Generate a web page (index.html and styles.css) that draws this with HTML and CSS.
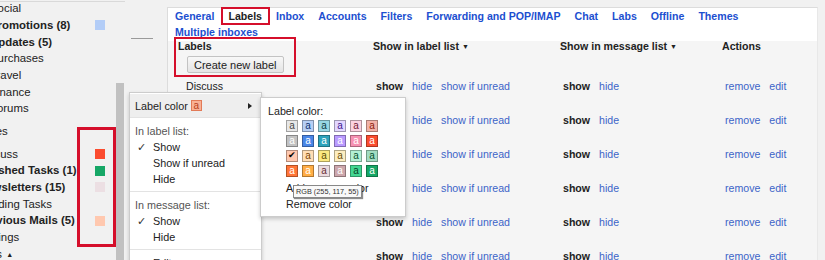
FILE: index.html
```html
<!DOCTYPE html>
<html lang="en">
<head>
  <meta charset="UTF-8">
  <title>Settings - Labels</title>
  <link rel="stylesheet" href="styles.css">
</head>
<body>
<div class="page">
  <!-- left navigation, scrolled sideways -->
  <nav class="nav">
    <div class="nav-labels">
      <ul class="nav-list">
        <li class="sub">Social</li>
        <li class="sub bold">Promotions (8)<i class="dot dot-blue"></i></li>
        <li class="sub bold">Updates (5)</li>
        <li class="sub">Purchases</li>
        <li class="sub">Travel</li>
        <li class="sub">Finance</li>
        <li class="sub">Forums</li>
        <li class="spaced">Notes</li>
        <li>Discuss<i class="dot dot-red"></i></li>
        <li class="bold">Finished Tasks (1)<i class="dot dot-green"></i></li>
        <li class="bold">Newsletters (15)<i class="dot dot-pink"></i></li>
        <li>Pending Tasks</li>
        <li class="bold">Previous Mails (5)<i class="dot dot-peach"></i></li>
        <li>Settings</li>
        <li><span>Less <span class="up">&#9650;</span></span></li>
      </ul>
      <div class="mark mark-dots"></div>
    </div>
    <div class="scrollbar"><div class="thumb"></div></div>
  </nav>

  <div class="gutter"><span class="dash"></span></div>

  <main class="panel">
    <div class="tabs">
      <a href="#">General</a>
      <a href="#" class="active">Labels</a>
      <a href="#">Inbox</a>
      <a href="#">Accounts</a>
      <a href="#">Filters</a>
      <a href="#">Forwarding and POP/IMAP</a>
      <a href="#">Chat</a>
      <a href="#">Labs</a>
      <a href="#">Offline</a>
      <a href="#">Themes</a>
      <a href="#">Multiple inboxes</a>
    </div>

    <div class="label-table">
      <div class="thead">
        <div class="name-head">
          <span>Labels</span>
          <button type="button">Create new label</button>
        </div>
        <div>Show in label list <span class="caret">&#9660;</span></div>
        <div>Show in message list <span class="caret">&#9660;</span></div>
        <div>Actions</div>
      </div>

      <div class="row">
        <div class="cell name">Discuss</div>
        <div class="cell"><b>show</b><a href="#">hide</a><a href="#">show if unread</a></div>
        <div class="cell"><b>show</b><a href="#">hide</a></div>
        <div class="cell"><a href="#">remove</a><a href="#">edit</a></div>
      </div>
      <div class="row">
        <div class="cell name">Finished Tasks</div>
        <div class="cell"><b>show</b><a href="#">hide</a><a href="#">show if unread</a></div>
        <div class="cell"><b>show</b><a href="#">hide</a></div>
        <div class="cell"><a href="#">remove</a><a href="#">edit</a></div>
      </div>
      <div class="row">
        <div class="cell name">Newsletters</div>
        <div class="cell"><b>show</b><a href="#">hide</a><a href="#">show if unread</a></div>
        <div class="cell"><b>show</b><a href="#">hide</a></div>
        <div class="cell"><a href="#">remove</a><a href="#">edit</a></div>
      </div>
      <div class="row">
        <div class="cell name">Notes</div>
        <div class="cell"><b>show</b><a href="#">hide</a><a href="#">show if unread</a></div>
        <div class="cell"><b>show</b><a href="#">hide</a></div>
        <div class="cell"><a href="#">remove</a><a href="#">edit</a></div>
      </div>
      <div class="row">
        <div class="cell name">Pending Tasks</div>
        <div class="cell"><b>show</b><a href="#">hide</a><a href="#">show if unread</a></div>
        <div class="cell"><b>show</b><a href="#">hide</a></div>
        <div class="cell"><a href="#">remove</a><a href="#">edit</a></div>
      </div>
      <div class="row">
        <div class="cell name">Previous Mails</div>
        <div class="cell"><b>show</b><a href="#">hide</a><a href="#">show if unread</a></div>
        <div class="cell"><b>show</b><a href="#">hide</a></div>
        <div class="cell"><a href="#">remove</a><a href="#">edit</a></div>
      </div>
    </div>
  </main>

  <!-- label context menu -->
  <div class="menu">
    <div class="menu-color">Label color <span class="swatch-now">a</span><span class="arrow"></span></div>
    <div class="menu-section">
      <h4>In label list:</h4>
      <div class="menu-item"><span class="check">&#10003;</span>Show</div>
      <div class="menu-item"><span class="check"></span>Show if unread</div>
      <div class="menu-item"><span class="check"></span>Hide</div>
    </div>
    <div class="menu-section">
      <h4>In message list:</h4>
      <div class="menu-item"><span class="check">&#10003;</span>Show</div>
      <div class="menu-item"><span class="check"></span>Hide</div>
    </div>
    <div class="menu-section last">
      <div class="menu-item"><span class="check"></span>Edit</div>
      <div class="menu-item"><span class="check"></span>Remove label</div>
    </div>
  </div>

  <!-- colour picker submenu -->
  <div class="palette">
    <div class="palette-title">Label color:</div>
    <div class="swatches">
      <span class="sw sw-1">a</span><span class="sw sw-2">a</span><span class="sw sw-3">a</span>
      <span class="sw sw-4">a</span><span class="sw sw-5">a</span><span class="sw sw-6">a</span>
      <span class="sw sw-7">a</span><span class="sw sw-8">a</span><span class="sw sw-9">a</span>
      <span class="sw sw-10">a</span><span class="sw sw-11">a</span><span class="sw sw-12">a</span>
      <span class="sw sw-13 picked">&#10004;</span><span class="sw sw-14">a</span><span class="sw sw-15">a</span>
      <span class="sw sw-16">a</span><span class="sw sw-17">a</span><span class="sw sw-18">a</span>
      <span class="sw sw-19">a</span><span class="sw sw-20">a</span><span class="sw sw-21">a</span>
      <span class="sw sw-22">a</span><span class="sw sw-23">a</span><span class="sw sw-24">a</span>
    </div>
    <div class="palette-link first">Add custom color</div>
    <div class="palette-link">Remove color</div>
  </div>

  <div class="tip">RGB (255, 117, 55)</div>
</div>
</body>
</html>
```

FILE: styles.css
```css
body {
  margin: 0;
  font-family: "Liberation Sans", Arial, sans-serif;
  background: #f1f1f1;
  color: #222;
  overflow: hidden;
}

.page {
  position: relative;
  display: flex;
  width: 825px;
  height: 260px;
  overflow: hidden;
}

/* left navigation */
.nav {
  display: flex;
  flex-shrink: 0;
  width: 125px;
  height: 258px;
  margin-top: 1px;
  border-top: 1px solid #d9d9d9;
}

.nav-labels {
  position: relative;
  width: 116px;
  overflow: hidden;
  font-size: 11.4px;
}

.nav-list {
  list-style: none;
  margin: -2px 0 0 -22px;
  padding: 0;
}

.nav-list li {
  display: flex;
  align-items: center;
  justify-content: space-between;
  height: 16.67px;
  white-space: nowrap;
}

.nav-list .sub {
  padding-left: 12px;
}

.nav-list .bold {
  font-weight: bold;
}

.nav-list .spaced {
  margin: 6px 0;
}

.nav-list .up {
  font-size: 7px;
  margin-left: 1px;
  vertical-align: 1px;
}

.dot {
  flex-shrink: 0;
  width: 10px;
  height: 10px;
  margin: 1px 11px 0 0;
}

.dot-blue { background: #b3cdf7; }
.dot-red { background: #fb4c2f; }
.dot-green { background: #16a766; }
.dot-pink { background: #ecdfe3; }
.dot-peach { background: #ffc8af; }

.mark {
  position: absolute;
  border: 3px solid #d50f2b;
  box-sizing: border-box;
}

.mark-dots {
  left: 77px;
  top: 125px;
  width: 39px;
  height: 120px;
}

.scrollbar {
  width: 8px;
  margin-right: 1px;
}

.thumb {
  margin-top: 81px;
  height: 200px;
  background: #c1c1c1;
}

.gutter {
  flex-shrink: 0;
  width: 42px;
}

.dash {
  display: block;
  width: 22px;
  height: 1px;
  margin: 38px 0 0 6px;
  background: #9a9a9a;
}

/* settings panel */
.panel {
  flex-shrink: 0;
  width: 651px;
  box-sizing: border-box;
  margin-top: 7px;
  border: 1px solid #dcdcdc;
  border-right-color: #e8e8e8;
  border-bottom: 0;
  background: #f5f5f5;
}

.tabs {
  display: flex;
  flex-wrap: wrap;
  column-gap: 14px;
  padding: 0 0 1px 7px;
  background: #fff;
  font-size: 10.6px;
  font-weight: bold;
  line-height: 16px;
}

.tabs a {
  color: #1c4fd0;
  text-decoration: none;
}

.tabs .active {
  position: relative;
  color: #222;
}

.tabs .active::after {
  content: "";
  position: absolute;
  inset: -1px -8px -1px -7px;
  border: 2px solid #d50f2b;
}

.label-table {
  padding-left: 10px;
  font-size: 10.6px;
}

.thead,
.row {
  display: grid;
  grid-template-columns: 195px 187px 162px 1fr;
}

.thead {
  padding-bottom: 4px;
  font-weight: bold;
  line-height: 11px;
}

.caret {
  font-size: 7px;
  vertical-align: 1px;
}

.name-head {
  position: relative;
  display: flex;
  flex-direction: column;
  align-items: flex-start;
}

.name-head::after {
  content: "";
  position: absolute;
  left: -4px;
  top: -4px;
  width: 122px;
  height: 40px;
  border: 2px solid #d50f2b;
  box-sizing: border-box;
}

.name-head button {
  height: 17px;
  margin: 4px 0 0 9px;
  padding: 0 6px;
  font: 11px "Liberation Sans", Arial, sans-serif;
  color: #222;
  border: 1px solid #c3c3c3;
  border-radius: 2px;
  background: linear-gradient(#f8f8f8, #e4e4e4);
}

.row {
  height: 34px;
  box-sizing: border-box;
  padding-top: 1.5px;
  line-height: 14px;
}

.row .cell {
  display: flex;
  gap: 9px;
  padding-left: 3px;
  white-space: nowrap;
}

.row .name {
  padding-left: 8px;
}

.row a {
  color: #3c64c8;
  text-decoration: none;
}

/* context menu */
.menu {
  position: absolute;
  left: 129px;
  top: 92px;
  width: 133px;
  box-sizing: border-box;
  padding-top: 1px;
  background: #fff;
  border: 1px solid rgba(0, 0, 0, 0.2);
  box-shadow: 0 2px 4px rgba(0, 0, 0, 0.2);
  font-size: 10.8px;
}

.menu-color {
  display: flex;
  align-items: center;
  height: 23px;
  padding: 0 9px 0 5px;
  background: #eee;
  border-bottom: 1px solid #e3e3e3;
}

.swatch-now {
  width: 11px;
  height: 11px;
  box-sizing: border-box;
  margin-left: 3px;
  border: 1px solid #e27a57;
  background: #f9b195;
  color: #b8401c;
  font-size: 10px;
  line-height: 9px;
  text-align: center;
}

.arrow {
  margin-left: auto;
  border-left: 4px solid #222;
  border-top: 3px solid transparent;
  border-bottom: 3px solid transparent;
}

.menu-section {
  padding: 5px 0 4px;
  border-bottom: 1px solid #e3e3e3;
  line-height: 16px;
}

.menu-section.last {
  border-bottom: 0;
}

.menu-section h4 {
  margin: 0;
  padding-left: 5px;
  font-size: inherit;
  font-weight: normal;
  color: #555;
}

.menu-item {
  display: flex;
  padding-left: 7px;
}

.check {
  width: 16px;
  color: #333;
}

/* colour picker */
.palette {
  position: absolute;
  left: 260px;
  top: 97px;
  width: 146px;
  box-sizing: border-box;
  padding: 6px 0 4px 7px;
  background: #fff;
  border: 1px solid rgba(0, 0, 0, 0.2);
  box-shadow: 0 2px 4px rgba(0, 0, 0, 0.2);
  font-size: 10.7px;
}

.palette-title {
  line-height: 14px;
}

.swatches {
  display: grid;
  grid-template-columns: repeat(6, 12px);
  column-gap: 4px;
  row-gap: 3px;
  margin: 2px 0 0 18px;
}

.sw {
  width: 12px;
  height: 12px;
  box-sizing: border-box;
  border: 1px solid rgba(0, 0, 0, 0.3);
  font-size: 10px;
  line-height: 9px;
  text-align: center;
}

.sw.picked {
  color: #000;
  font-size: 9px;
}

.sw-1 { background: #e7e7e7; color: #464646; }
.sw-2 { background: #b6cff5; color: #0d3472; }
.sw-3 { background: #98d7e4; color: #0d3b44; }
.sw-4 { background: #e3d7ff; color: #3d188e; }
.sw-5 { background: #fbd3e0; color: #711a36; }
.sw-6 { background: #f2b2a8; color: #8a1c0a; }
.sw-7 { background: #c2c2c2; color: #fff; }
.sw-8 { background: #4986e7; color: #fff; }
.sw-9 { background: #2da2bb; color: #fff; }
.sw-10 { background: #b99aff; color: #fff; }
.sw-11 { background: #f691b2; color: #fff; }
.sw-12 { background: #fb4c2f; color: #fff; }
.sw-13 { background: #ffc8af; color: #7a2e0b; }
.sw-14 { background: #ffdeb5; color: #7a4706; }
.sw-15 { background: #fbe983; color: #594c05; }
.sw-16 { background: #fdedc1; color: #684e07; }
.sw-17 { background: #b3efd3; color: #0b4f30; }
.sw-18 { background: #a2dcc1; color: #04502e; }
.sw-19 { background: #ff7537; color: #fff; }
.sw-20 { background: #ffad46; color: #fff; }
.sw-21 { background: #ebdbde; color: #662e37; }
.sw-22 { background: #cca6ac; color: #fff; }
.sw-23 { background: #42d692; color: #094228; }
.sw-24 { background: #16a766; color: #fff; }

.palette-link {
  margin-left: 18px;
  line-height: 16px;
}

.palette-link.first {
  margin-top: 3px;
}

.tip {
  position: absolute;
  left: 293px;
  top: 185px;
  padding: 0 2px;
  font-size: 7.3px;
  line-height: 11px;
  color: #333;
  white-space: nowrap;
  background: #f9f9f9;
  border: 1px solid #888;
  box-shadow: 1px 1px 1px rgba(0, 0, 0, 0.45);
}
```
